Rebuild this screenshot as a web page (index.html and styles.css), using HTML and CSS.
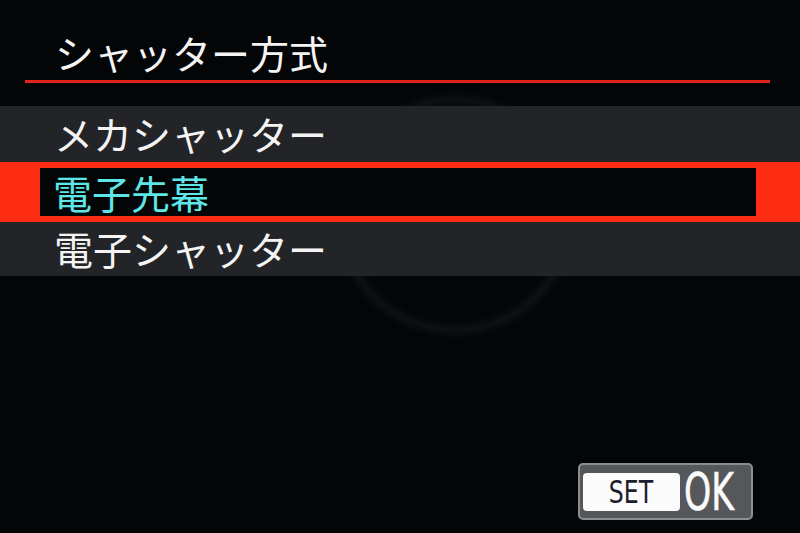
FILE: index.html
```html
<!DOCTYPE html>
<html lang="ja">
<head>
<meta charset="utf-8">
<link rel="stylesheet" href="styles.css">
</head>
<body>
<div class="screen">
  <header class="header">
    <h1 class="title">シャッター方式</h1>
    <div class="rule"></div>
  </header>
  <ul class="menu">
    <li class="item">メカシャッター</li>
    <li class="item selected"><span class="inner">電子先幕</span></li>
    <li class="item last">電子シャッター</li>
  </ul>
  <footer class="footer">
    <div class="setok">
      <span class="set"><span class="set-text">SET</span></span>
      <span class="ok">OK</span>
    </div>
  </footer>
</div>
</body>
</html>
```
FILE: styles.css
```css
html, body {
  margin: 0;
  padding: 0;
  background: #040507;
}
.screen {
  width: 800px;
  height: 533px;
  display: flex;
  flex-direction: column;
  background:
    radial-gradient(circle at 455px 215px, transparent 106px, rgba(50,54,56,0.22) 115px, transparent 124px),
    #040507;
  font-family: "Noto Sans CJK JP", "Noto Sans", sans-serif;
  color: #f4f4f4;
  overflow: hidden;
}
.header {
  padding-top: 25px;
}
.title {
  margin: 0;
  padding-left: 55px;
  font-size: 39px;
  font-weight: 400;
  line-height: 55px;
  height: 55px;
}
.rule {
  margin-left: 25px;
  width: 745px;
  height: 3px;
  background: #e3231d;
}
.menu {
  list-style: none;
  margin: 23px 0 0 0;
  padding: 0;
  background: #222428;
}
.item {
  height: 56px;
  line-height: 54px;
  padding-left: 54px;
  font-size: 39px;
  font-weight: 400;
  box-sizing: border-box;
}
.item.selected {
  height: 60px;
  padding: 6px 44px 6px 40px;
  background: #ff2c14;
}
.item.last {
  height: 54px;
  line-height: 52px;
}
.inner {
  display: block;
  height: 48px;
  line-height: 48px;
  padding-left: 13px;
  background: #040507;
  color: #5ee6e6;
}
.footer {
  margin-top: auto;
  display: flex;
  justify-content: flex-end;
  padding: 0 47px 13px 0;
}
.setok {
  width: 175px;
  height: 57px;
  box-sizing: border-box;
  border: 2px solid #8c8e90;
  border-radius: 5px;
  background: #55575b;
  display: flex;
  align-items: center;
  padding-left: 3px;
}
.set {
  width: 105px;
  height: 38px;
  background: #fbfbfb;
  border-radius: 4px;
  display: flex;
  align-items: center;
  justify-content: center;
}
.set-text {
  font-family: "DejaVu Sans", sans-serif;
  font-stretch: condensed;
  font-size: 32px;
  color: #1c1c2c;
  transform: scaleX(0.82);
  line-height: 1;
  margin-top: 1px;
}
.ok {
  margin-left: 4px;
  font-family: "DejaVu Sans", sans-serif;
  font-stretch: condensed;
  font-size: 52px;
  font-weight: 500;
  color: #fafafa;
  line-height: 1;
  display: inline-block;
  transform: scaleX(0.74);
  transform-origin: left center;
  -webkit-text-stroke: 0.6px #fafafa;
}
```
